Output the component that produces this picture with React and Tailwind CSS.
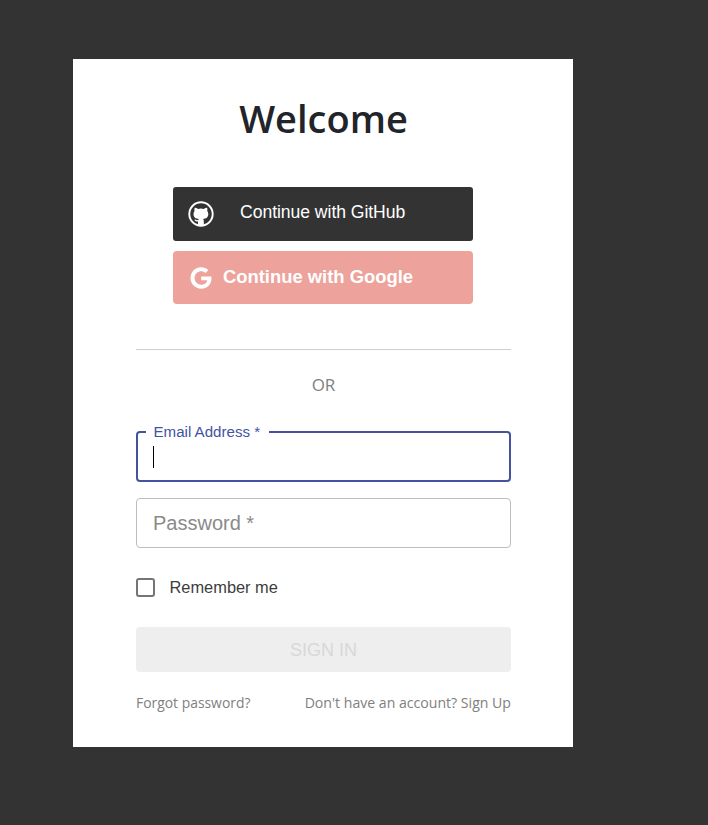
import { FaGoogle } from "react-icons/fa";

const sans = "font-['Liberation_Sans',Arial,sans-serif]";
const segoe = "font-['Open_Sans','Noto_Sans',sans-serif]";

// ring with the cat filled in, the packaged github marks are solid
function GithubIcon() {
  return (
    <svg viewBox="0 0 26 26" className="w-[26px] h-[26px] shrink-0" fill="none">
      <circle cx="13" cy="13" r="11.7" stroke="#fff" strokeWidth="1.9" />
      <path
        fill="#fff"
        d="M10 24v-3.600c-1.800.2-3-.4-3.700-1.700l1.300-.2c.6.700 1.400.9 2.600.6.100-.5.300-.9.600-1.200-3-.4-5.300-1.500-5.300-5 0-1.200.4-2.200 1.100-3-.2-.6-.4-1.900.1-3.200 0 0 1.200-.3 3.300 1.200a10 10 0 0 1 5.800 0c2.100-1.500 3.300-1.200 3.300-1.200.5 1.300.3 2.600.1 3.200.7.800 1.100 1.800 1.100 3 0 3.500-2.300 4.600-5.300 5 .5.400.8 1.100.8 2V24c-2 .6-3.800.6-5.800 0z"
      />
    </svg>
  );
}

function App() {
  return (
    <div className="bg-[#333333] min-h-screen pt-[59px] pl-[73px]">
      <div className="bg-white w-[500px] h-[688px] pl-[63px] pr-[62px] flex flex-col">
        <h1 className={`${segoe} text-[38px] leading-[50px] font-semibold text-[#212529] text-center mt-[34px]`}>
          Welcome
        </h1>

        <div className="flex flex-col gap-[10px] mt-[44px] ml-[37px]">
          <button className={`${sans} bg-[#333333] text-white w-[300px] h-[54px] rounded-[3px] flex items-center pl-[15px] pb-[3px] text-[17.6px]`}>
            <span className="mt-[3px]"><GithubIcon /></span>
            <span className="ml-[26px] tracking-[-0.05px]">Continue with GitHub</span>
          </button>
          <button className={`${sans} bg-[#eda29c] text-white w-[300px] h-[53px] rounded-[4px] flex items-center pl-[17px] pb-[1px] text-[18.4px] font-bold`}>
            <FaGoogle className="w-[22px] h-[22px] shrink-0 mt-[1px]" />
            <span className="ml-[11px]">Continue with Google</span>
          </button>
        </div>

        <div className="border-t border-[#cfcfcf] mt-[45px]" />
        <p className={`${segoe} text-[17px] leading-[22px] text-[#808080] text-center mt-[24px]`}>OR</p>

        <div className="relative mt-[35px] h-[51px] border-2 border-[#43539f] rounded-[4px]">
          <label className={`${sans} absolute -top-[9px] left-[8px] bg-white pl-[7.5px] pr-[9px] text-[15.1px] leading-[16px] text-[#43539f]`}>
            Email Address *
          </label>
          <div className="absolute left-[15px] top-[13px] w-px h-[22px] bg-black" />
        </div>

        <div className={`${sans} mt-[16px] h-[50px] border border-[#bdbdbd] rounded-[4px] flex items-center pl-[16px] text-[20px] text-[#8a8a8a]`}>
          Password *
        </div>

        <label className={`${sans} flex items-center mt-[29px] text-[16.4px] leading-[20px] text-[#3d3d3d]`}>
          <span className="w-[19px] h-[19px] border-2 border-[#757575] rounded-[3px]" />
          <span className="ml-[14.5px]">Remember me</span>
        </label>

        <div className={`${sans} mt-[30px] h-[45px] pt-[2px] rounded-[4px] bg-[#eeeeee] flex items-center justify-center text-[18px] text-[#d8d8d8]`}>
          SIGN IN
        </div>

        <div className={`${segoe} flex justify-between mt-[21px] leading-[20px] text-[#808080]`}>
          <span className="text-[13.9px]">Forgot password?</span>
          <span className="text-[14.1px]">Don't have an account? Sign Up</span>
        </div>
      </div>
    </div>
  );
}

export default App;
